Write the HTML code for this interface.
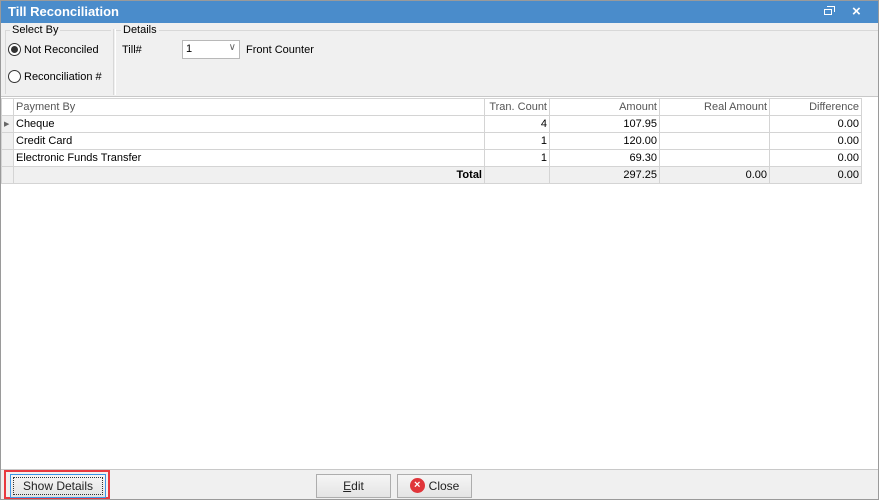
<!DOCTYPE html><html><head><style>
*{margin:0;padding:0;box-sizing:border-box}
body{width:879px;height:500px;overflow:hidden;background:#fff;font-family:"Liberation Sans",sans-serif;font-size:11px;color:#000;position:relative}
.a{position:absolute}
.title{left:0;top:0;width:879px;height:23px;background:#4a8ccb;color:#fff;font-weight:bold;font-size:13px;padding:4px 0 0 8px}
.frame{left:0;top:0;width:879px;height:500px;border:1px solid #9a9a9a;pointer-events:none}
.top{left:1px;top:23px;width:877px;height:74px;background:#f0f0f0;border-bottom:1px solid #c8c8c8}
.grp{border-top:1px solid #d8d8d8}
table{border-collapse:collapse;position:absolute;left:1px;top:98px;table-layout:fixed}
td{height:17px;border:1px solid #d4d4d4;padding:0 2px;white-space:nowrap;overflow:hidden}
.h td{background:#fff;color:#555;}
.r{text-align:right}
.ind{background:#f0f0f0;width:12px}
.tot td{background:#f0f0f0}
.bot{left:1px;top:469px;width:877px;height:30px;background:#f0f0f0;border-top:1px solid #c8c8c8}
.btn{height:24px;border:1px solid #adadad;background:linear-gradient(#f5f5f5,#e4e4e4);text-align:center;line-height:22px;color:#222;font-size:12px}
</style></head><body>
<div class="a title">Till Reconciliation</div>
<div class="a" style="left:824px;top:9px;width:8px;height:6px;border:1.5px solid #fff"></div>
<div class="a" style="left:827px;top:6px;width:8px;height:6px;border-top:1.5px solid #fff;border-right:1.5px solid #fff"></div>
<div class="a" style="left:852px;top:3px;color:#fff;font-size:15px;font-weight:bold">×</div>
<div class="a top"></div>
<div class="a grp" style="left:5px;top:30px;width:106px;height:64px;border-left:1px solid #d8d8d8"></div>
<div class="a" style="left:10px;top:24px;background:#f0f0f0;padding:0 2px">Select By</div>
<div class="a" style="left:113px;top:29px;width:3px;height:66px;border-left:1px solid #d8d8d8;border-right:1px solid #fff"></div>
<div class="a grp" style="left:116px;top:30px;width:762px;height:1px"></div>
<div class="a" style="left:121px;top:24px;background:#f0f0f0;padding:0 2px">Details</div>
<div class="a" style="left:8px;top:43px;width:13px;height:13px;border:1px solid #333;border-radius:50%;background:#fff"></div>
<div class="a" style="left:11px;top:46px;width:7px;height:7px;border-radius:50%;background:#333"></div>
<div class="a" style="left:24px;top:44px">Not Reconciled</div>
<div class="a" style="left:8px;top:70px;width:13px;height:13px;border:1px solid #333;border-radius:50%;background:#fff"></div>
<div class="a" style="left:24px;top:71px">Reconciliation #</div>
<div class="a" style="left:122px;top:44px">Till#</div>
<div class="a" style="left:182px;top:40px;width:58px;height:19px;border:1px solid #b8b8b8;background:#fff;padding:2px 3px">1<span style="position:absolute;right:3px;top:1px;color:#666;font-size:10px">&#x2228;</span></div>
<div class="a" style="left:246px;top:44px">Front Counter</div>
<table>
<colgroup><col style="width:12px"><col style="width:471px"><col style="width:65px"><col style="width:110px"><col style="width:110px"><col style="width:92px"></colgroup>
<tr class="h"><td class="ind"></td><td>Payment By</td><td class="r">Tran. Count</td><td class="r">Amount</td><td class="r">Real Amount</td><td class="r">Difference</td></tr>
<tr><td class="ind" style="font-size:7px;color:#666">&#9654;</td><td>Cheque</td><td class="r">4</td><td class="r">107.95</td><td></td><td class="r">0.00</td></tr>
<tr><td class="ind"></td><td>Credit Card</td><td class="r">1</td><td class="r">120.00</td><td></td><td class="r">0.00</td></tr>
<tr><td class="ind"></td><td>Electronic Funds Transfer</td><td class="r">1</td><td class="r">69.30</td><td></td><td class="r">0.00</td></tr>
<tr class="tot"><td class="ind"></td><td class="r" style="font-weight:bold">Total</td><td></td><td class="r">297.25</td><td class="r">0.00</td><td class="r">0.00</td></tr>
</table>
<div class="a bot"></div>
<div class="a" style="left:4px;top:470px;width:106px;height:29px;border:2px solid #e8393f"></div>
<div class="a btn" style="left:10px;top:474px;width:96px;border-color:#3c94e6"><span style="display:block;margin:2px;border:1px dotted #333;line-height:16px">Show Details</span></div>
<div class="a btn" style="left:316px;top:474px;width:75px"><u>E</u>dit</div>
<div class="a btn" style="left:397px;top:474px;width:75px"><span style="display:inline-block;width:15px;height:15px;border-radius:50%;background:#e0353a;color:#fff;font-size:11px;line-height:15px;font-weight:bold;vertical-align:middle;margin-right:4px;position:relative;top:-1px">×</span>Close</div>
<div class="a frame"></div>
</body></html>
